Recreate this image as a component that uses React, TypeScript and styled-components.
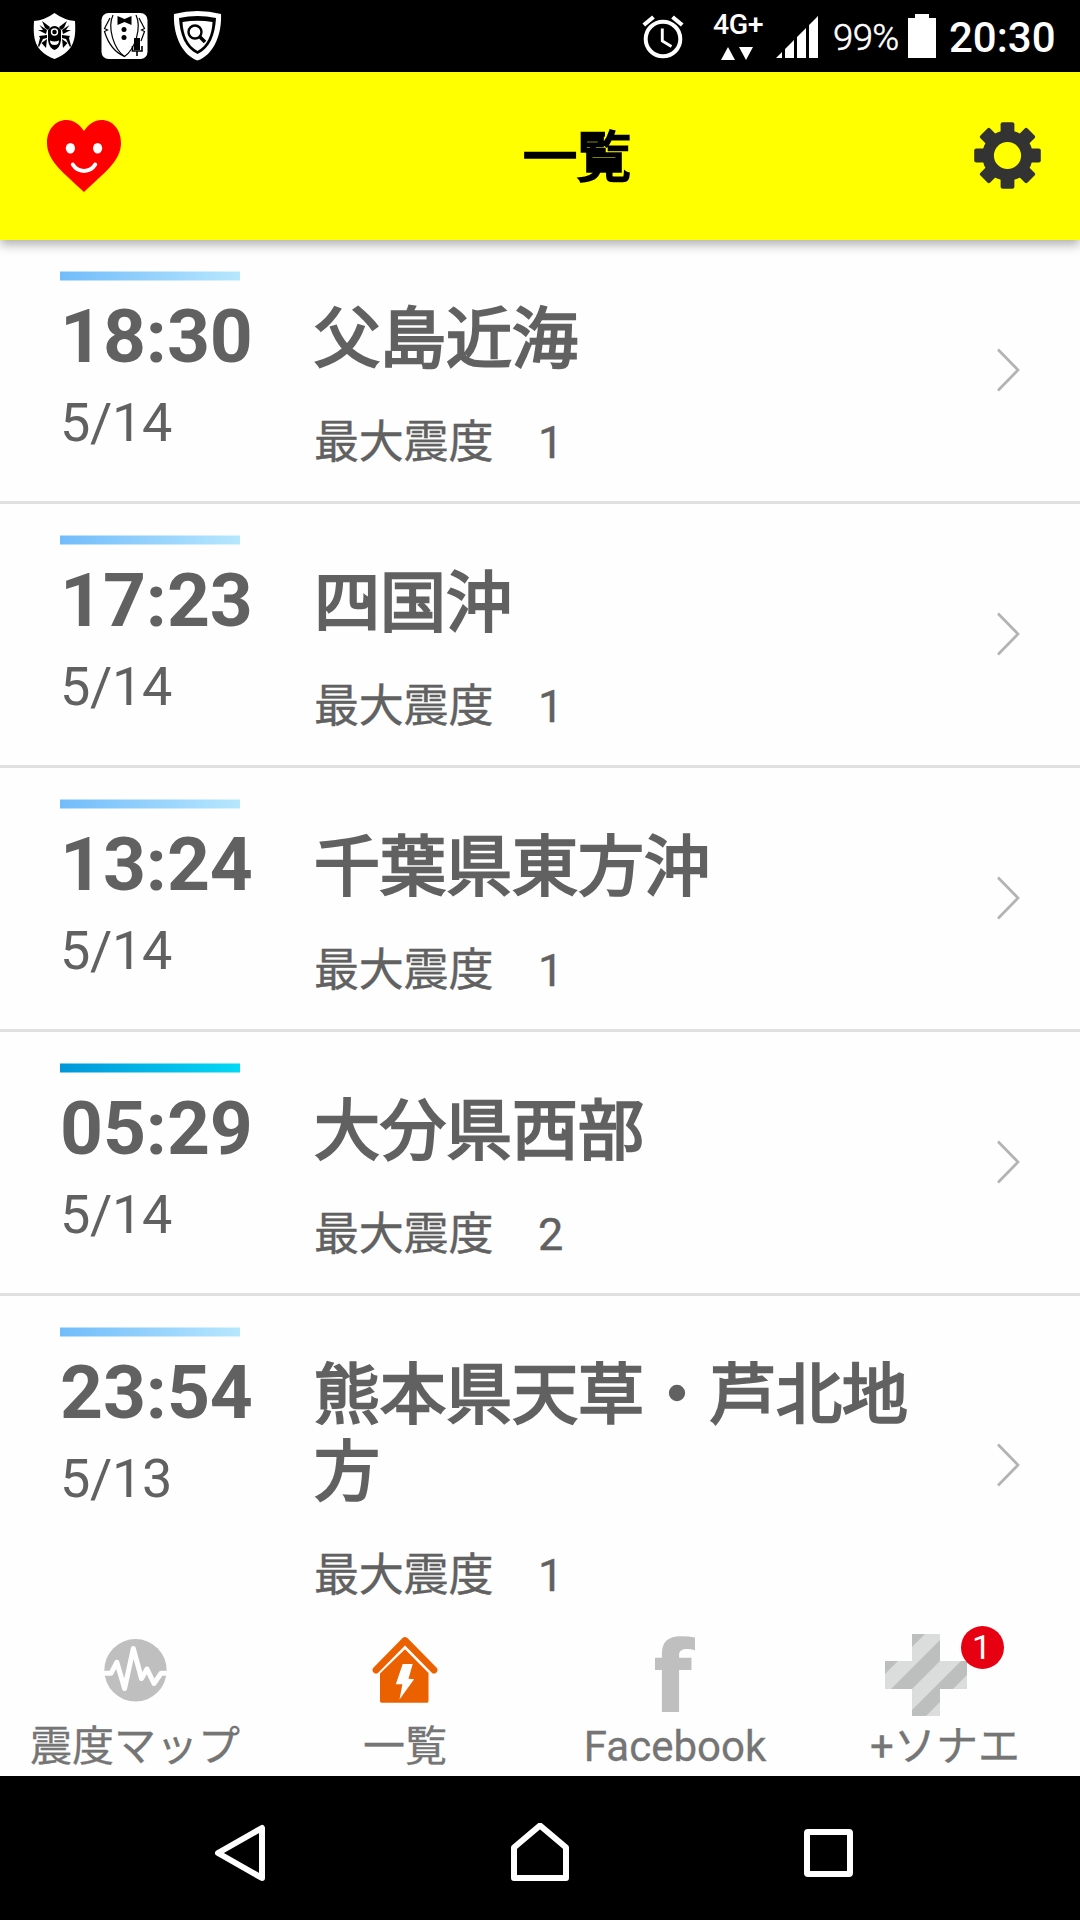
import React from "react";
import styled, { createGlobalStyle } from "styled-components";

const GlobalStyle = createGlobalStyle`
  body { margin: 0; background: #fff; }
  * { box-sizing: border-box; }
  svg { display: block; flex: none; }
`;

const Screen = styled.div`
  width: 1080px;
  height: 1920px;
  display: flex;
  flex-direction: column;
  overflow: hidden;
  background: #fefefe;
  color: #616161;
  font-family: Roboto, "Noto Sans CJK JP", sans-serif;
`;

const StatusBar = styled.div`
  flex: none;
  height: 72px;
  display: flex;
  align-items: center;
  justify-content: space-between;
  padding: 0 24px 0 33px;
  background: #000;
  color: #fff;
`;

const StatusGroup = styled.div`
  height: 72px;
  display: flex;
  align-items: center;
`;

const Notices = styled(StatusGroup)`
  gap: 25px;
`;

const Network = styled.div`
  width: 52px;
  margin-left: 28px;
  padding-bottom: 1px;
  display: flex;
  flex-direction: column;
  align-items: center;
  gap: 8px;
`;

const NetworkLabel = styled.span`
  font-size: 28.5px;
  font-weight: 500;
  line-height: 28px;
  letter-spacing: -0.5px;
  white-space: nowrap;
`;

const Percent = styled.span`
  margin-left: 15px;
  width: 75px;
  padding-top: 4px;
  font-size: 36.5px;
  line-height: 44px;
  font-weight: 300;
  letter-spacing: -0.6px;
  -webkit-text-stroke: 0.5px #fff;
`;

const Clock = styled.span`
  margin-left: 13px;
  width: 107px;
  padding-top: 3px;
  font-size: 42px;
  line-height: 50px;
  font-weight: 500;
`;

const Header = styled.header`
  flex: none;
  position: relative;
  z-index: 1;
  height: 168px;
  display: flex;
  align-items: center;
  padding: 0 39px 0 47px;
  background: #ff0;
  box-shadow: 0 5px 10px rgba(0, 0, 0, 0.3);
`;

const HeaderTitle = styled.h1`
  flex: 1;
  margin: 0;
  padding: 5px 0 0 59px;
  text-align: center;
  color: #000;
  font-size: 54px;
  line-height: 64px;
  font-weight: 400;
  -webkit-text-stroke: 2.5px #000;
`;

const List = styled.main`
  flex: 1;
  min-height: 0;
  overflow: hidden;
`;

const Row = styled.article`
  min-height: 264px;
  display: flex;
  align-items: stretch;
  padding: 31px 60px 32px 60px;
  border-bottom: 3px solid #e0e0e0;
`;

const When = styled.div`
  flex: none;
  width: 254px;
  height: 198px;
`;

const Bar = styled.div<{ $strong?: boolean }>`
  width: 180px;
  height: 10px;
  background: linear-gradient(
    90deg,
    ${(p) => (p.$strong ? "#0096d9, #04d8f4" : "#71bcfb, #b7e7fe")}
  );
  box-shadow: inset 0 1px rgba(255, 255, 255, 0.5), inset 0 -1px rgba(255, 255, 255, 0.5);
`;

const Time = styled.div`
  margin-top: 11px;
  font-size: 75px;
  line-height: 88px;
  font-weight: 700;
  letter-spacing: -0.1px;
`;

const DateText = styled.div`
  margin-top: 11px;
  font-size: 54px;
  line-height: 63px;
  letter-spacing: -0.3px;
`;

const Where = styled.div`
  flex: 1;
  padding: 30px 50px 0 0;
`;

const Place = styled.h2`
  margin: 0;
  font-size: 66px;
  line-height: 77px;
  font-weight: 400;
  -webkit-text-stroke: 2.3px #616161;
`;

const Intensity = styled.div`
  margin-top: 38px;
  font-size: 45px;
  line-height: 53px;
  letter-spacing: -0.2px;
  -webkit-text-stroke: 0.4px #616161;
`;

const ArrowCell = styled.div`
  flex: none;
  width: 24px;
  display: flex;
  align-items: center;
`;

const TabBar = styled.nav`
  flex: none;
  height: 160px;
  display: grid;
  grid-template-columns: repeat(4, 1fr);
  background: #fefefe;
`;

const Tab = styled.div`
  display: flex;
  flex-direction: column;
  align-items: center;
`;

const TabIcon = styled.div`
  position: relative;
  height: 106px;
`;

const BadgedIcon = styled(TabIcon)`
  margin-right: 38px;
`;

const TabLabel = styled.span`
  color: #757575;
  font-size: 42px;
  line-height: 50px;
  white-space: nowrap;
  -webkit-text-stroke: 0.3px #757575;
`;

const Badge = styled.span`
  position: absolute;
  left: 76px;
  top: 10px;
  width: 43px;
  height: 43px;
  border-radius: 50%;
  background: #e60012;
  color: #fff;
  font-size: 34px;
  line-height: 43px;
  text-align: center;
  text-indent: -2px;
`;

const NavBar = styled.div`
  flex: none;
  height: 144px;
  display: flex;
  justify-content: space-between;
  align-items: center;
  padding: 10px 227px 0 204px;
  background: #000;
`;

const SpiderShield = () => (
  <svg width="43" height="48" viewBox="0 0 43 48">
    <path d="M21.5 1Q12 8 1 9C0 26 1 39 21.5 47C42 39 43 26 42 9Q31 8 21.5 1Z" fill="#fff" />
    <g fill="#000">
      <path d="M9 9 17 15 15 18 12 16ZM34 9 26 15 28 18 31 16Z" />
      <path d="M6.500 13 14 18 13 22 5 18 10 18ZM36.500 13 29 18 30 22 38 18 33 18Z" />
      <path d="M6 24 14 23V26L10 27 6 35 5 34 7 26ZM37 24 29 23V26L33 27 37 35 38 34 36 26Z" />
      <path d="M14 27 13 36 8.500 31ZM29 27 30 36 34.500 31Z" />
      <path d="M15 18Q21.500 10 28 18L28 28Q27 36 21.500 38Q16 36 15 28Z" />
    </g>
    <path d="M17 28.500Q21.500 30.500 26 28.500Q26 33 21.500 33Q17 33 17 28.500Z" fill="#fff" />
    <circle cx="21.5" cy="20" r="3" fill="#000" stroke="#fff" strokeWidth="1.4" />
  </svg>
);

const Tuxedo = () => (
  <svg width="47" height="48" viewBox="0 0 47 48">
    <rect x=".5" y="1" width="46" height="46" rx="7" fill="#fff" />
    <g fill="none" stroke="#000" strokeWidth="1.2">
      <path d="M12 3C6 16 13 37 23.500 44.500C34 37 41 16 35 3" />
      <path d="M9 6 3.500 16.500 6.500 18 3.500 19.500C7 31 13 40 23.500 44.500M38 6 43.500 16.500 40.500 18 43.500 19.500 40 29" />
    </g>
    <path d="M16.500 4 23.500 7 30.500 4V13L23.500 10 16.500 13Z" fill="#000" />
    <circle cx="23" cy="17.500" r="2.500" fill="#000" />
    <circle cx="23" cy="25.500" r="2.500" fill="#000" />
    <rect x="33" y="26" width="6" height="12" fill="#000" />
    <path d="M31.500 34V39H41V34M36 39V44" fill="none" stroke="#000" strokeWidth="1.6" />
  </svg>
);

const SearchShield = () => (
  <svg width="49" height="52" viewBox="0 0 49 52">
    <path d="M1 4Q24.500-2 48 4C49 25 40 45 24.500 50.500C9 45 0 25 1 4Z" fill="#fff" />
    <path d="M6 8Q24.500 4 43 8C42 25 37 38 24.500 44C12 38 7 25 6 8Z" fill="#000" />
    <path d="M9.500 12Q24.500 9.500 39.500 12C39 25 34 36 24.500 41C15 36 10 25 9.500 12Z" fill="#fff" />
    <circle cx="22" cy="22" r="6.500" fill="none" stroke="#000" strokeWidth="2.400" />
    <path d="M26.500 26.500 32 32" stroke="#000" strokeWidth="3.600" />
  </svg>
);

const Alarm = styled(({ className }: { className?: string }) => (
  <svg className={className} width="42" height="46" viewBox="0 0 42 46">
    <circle cx="21" cy="25" r="17.300" fill="none" stroke="#fff" strokeWidth="4" />
    <path d="M20.300 14.500V27L29.500 32.500" fill="none" stroke="#fff" strokeWidth="2.900" />
    <path d="M1.800 11 11.500 3M40.200 11 30.500 3" stroke="#fff" strokeWidth="4.200" />
  </svg>
))`
  margin: 1px 0 0 0;
`;

const DataArrows = () => (
  <svg width="34" height="13" viewBox="0 0 34 13">
    <path d="M0 13H14L7 0ZM18 0H32L25 13Z" fill="#fff" />
  </svg>
);

const Signal = styled(({ className }: { className?: string }) => (
  <svg className={className} width="42" height="42" viewBox="0 0 42 42">
    <path d="M0 42 6 36V42ZM9 33 18 24V42H9ZM21 21 30 12V42H21ZM33 9 42 0V42H33Z" fill="#fff" />
  </svg>
))`
  margin: 2px 0 0 12px;
`;

const Battery = () => (
  <svg width="28" height="44" viewBox="0 0 28 44">
    <path d="M7 0H21V4H28V44H0V4H7Z" fill="#fff" />
  </svg>
);

const Heart = () => (
  <svg width="74" height="72" viewBox="0 0 74 72">
    <path
      d="M37 11C32 4 27 0 19.500 0C8 0 0 10 0 23C0 41 17 53 37 72C57 53 74 41 74 23C74 10 66 0 54.500 0C47 0 42 4 37 11Z"
      fill="#f00"
    />
    <ellipse cx="23.400" cy="28.300" rx="4.600" ry="5.300" fill="#fff" />
    <ellipse cx="50.600" cy="28.300" rx="4.600" ry="5.300" fill="#fff" />
    <path d="M25.800 44.500C31 53 43 53 48.200 44.500" fill="none" stroke="#fff" strokeWidth="4" strokeLinecap="round" />
  </svg>
);

const Gear = () => (
  <svg width="67" height="68" viewBox="-33.5 -33.5 67 68">
    <g fill="#333">
      {[0, 45, 90, 135].map((angle) => (
        <rect key={angle} x="-6.900" y="-33.300" width="13.800" height="66.600" rx="2" transform={`rotate(${angle})`} />
      ))}
      <circle r="25.300" />
    </g>
    <circle r="13.600" fill="#ff0" />
  </svg>
);

const Chevron = () => (
  <svg width="24" height="44" viewBox="0 0 24 44">
    <path d="M2 1.500 22 22 2 42.500" fill="none" stroke="#b3b3b3" strokeWidth="2.700" />
  </svg>
);

const SeismoIcon = () => (
  <svg width="64" height="104" viewBox="103 1616 64 104">
    <circle cx="135.500" cy="1670.300" r="31.200" fill="#bfbfbf" />
    <path
      d="M103 1673.300H111L116.800 1662.300 124.600 1688.500 133.300 1648.500 141.500 1678.500 147 1669 154 1683.500 161 1673.300H169"
      fill="none"
      stroke="#fefefe"
      strokeWidth="5"
      strokeLinejoin="round"
    />
  </svg>
);

const HouseIcon = () => (
  <svg width="66" height="104" viewBox="371.500 1616 66 104">
    <path d="M375.500 1670 404.500 1640.500 433.500 1670" fill="none" stroke="#eb6100" strokeWidth="6.800" strokeLinecap="round" strokeLinejoin="round" />
    <path d="M404.500 1649.300 428 1673V1701Q428 1702.700 426.500 1702.700H381Q379.500 1702.700 379.500 1701V1673.500Z" fill="#eb6100" />
    <path d="M402.200 1664H412.200L408 1678.700 413.600 1679.300 399 1699.500 401.900 1684.300H395.300Z" fill="#fff" />
  </svg>
);

const FacebookIcon = () => (
  <svg width="40" height="104" viewBox="655 1616 40 104">
    <path
      d="M661.900 1712V1670H655V1657.700H661.900V1654C661.900 1642 668 1636.300 681 1636.300Q689 1636.300 695 1637.500V1650.300C687 1648 679 1648.500 679.100 1655V1657.700H691.500V1670H679.100V1712Z"
      fill="#bfbfbf"
    />
  </svg>
);

const CrossIcon = () => (
  <svg width="82" height="104" viewBox="0 0 82 104">
    <defs>
      <clipPath id="cross">
        <path d="M27 18H55V45H82V73H55V100H27V73H0V45H27Z" />
      </clipPath>
    </defs>
    <g clipPath="url(#cross)">
      <rect width="82" height="104" fill="#dbdddc" />
      <path d="M0 0H58L0 58ZM79 0H100L0 100V79ZM121 0H141L0 141V121Z" fill="#bdbfbe" />
    </g>
  </svg>
);

const quakes = [
  { time: "18:30", date: "5/14", place: "父島近海", level: 1 },
  { time: "17:23", date: "5/14", place: "四国沖", level: 1 },
  { time: "13:24", date: "5/14", place: "千葉県東方沖", level: 1 },
  { time: "05:29", date: "5/14", place: "大分県西部", level: 2 },
  { time: "23:54", date: "5/13", place: "熊本県天草・芦北地方", level: 1 },
];

export default function App() {
  return (
    <Screen>
      <GlobalStyle />
      <StatusBar>
        <Notices>
          <SpiderShield />
          <Tuxedo />
          <SearchShield />
        </Notices>
        <StatusGroup>
          <Alarm />
          <Network>
            <NetworkLabel>4G+</NetworkLabel>
            <DataArrows />
          </Network>
          <Signal />
          <Percent>99%</Percent>
          <Battery />
          <Clock>20:30</Clock>
        </StatusGroup>
      </StatusBar>
      <Header>
        <Heart />
        <HeaderTitle>一覧</HeaderTitle>
        <Gear />
      </Header>
      <List>
        {quakes.map((quake) => (
          <Row key={quake.time}>
            <When>
              <Bar $strong={quake.level > 1} />
              <Time>{quake.time}</Time>
              <DateText>{quake.date}</DateText>
            </When>
            <Where>
              <Place>{quake.place}</Place>
              <Intensity>最大震度　{quake.level}</Intensity>
            </Where>
            <ArrowCell>
              <Chevron />
            </ArrowCell>
          </Row>
        ))}
      </List>
      <TabBar>
        <Tab>
          <TabIcon><SeismoIcon /></TabIcon>
          <TabLabel>震度マップ</TabLabel>
        </Tab>
        <Tab>
          <TabIcon><HouseIcon /></TabIcon>
          <TabLabel>一覧</TabLabel>
        </Tab>
        <Tab>
          <TabIcon><FacebookIcon /></TabIcon>
          <TabLabel>Facebook</TabLabel>
        </Tab>
        <Tab>
          <BadgedIcon><CrossIcon /><Badge>1</Badge></BadgedIcon>
          <TabLabel>+ソナエ</TabLabel>
        </Tab>
      </TabBar>
      <NavBar>
        <svg width="72" height="64" viewBox="204 1816 72 64">
          <path d="M218 1848 262 1823V1873Z" fill="none" stroke="#fff" strokeWidth="6" strokeLinejoin="round" />
        </svg>
        <svg width="60" height="60" viewBox="510 1823 60 60">
          <path d="M540 1825.500 566 1847.500V1878H514V1847.500Z" fill="none" stroke="#fff" strokeWidth="6" strokeLinejoin="round" />
        </svg>
        <svg width="49" height="48" viewBox="0 0 49 48">
          <rect x="3" y="3" width="43" height="42" rx="1" fill="none" stroke="#fff" strokeWidth="6" />
        </svg>
      </NavBar>
    </Screen>
  );
}
